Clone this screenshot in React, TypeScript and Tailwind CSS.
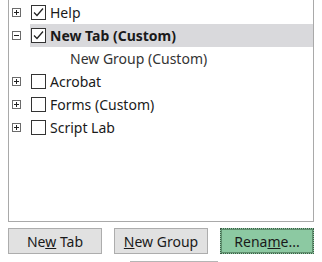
import { ReactNode } from 'react';

type Row = {
  label: string;
  expand?: 'plus' | 'minus';
  checked?: boolean;
  bold?: boolean;
  selected?: boolean;
  child?: boolean;
};

const rows: Row[] = [
  { label: 'Help', expand: 'plus', checked: true },
  { label: 'New Tab (Custom)', expand: 'minus', checked: true, bold: true, selected: true },
  { label: 'New Group (Custom)', child: true },
  { label: 'Acrobat', expand: 'plus' },
  { label: 'Forms (Custom)', expand: 'plus' },
  { label: 'Script Lab', expand: 'plus' },
];

function ExpandBox({ kind }: { kind: 'plus' | 'minus' }) {
  return (
    <svg width="9" height="9" viewBox="0 0 9 9" className="shrink-0">
      <rect x="0.5" y="0.5" width="8" height="8" fill="white" stroke="#6b6b6b" />
      <line x1="2" y1="4.5" x2="7" y2="4.5" stroke="#222" />
      {kind === 'plus' && <line x1="4.5" y1="2" x2="4.5" y2="7" stroke="#222" />}
    </svg>
  );
}

function CheckBox({ checked }: { checked?: boolean }) {
  return (
    <svg width="15" height="15" viewBox="0 0 15 15" className="shrink-0">
      <rect x="0.5" y="0.5" width="14" height="14" fill="white" stroke="#333" />
      {checked && (
        <path d="M3 7.5 L6 10.5 L12 3.5" fill="none" stroke="#222" strokeWidth="1.3" />
      )}
    </svg>
  );
}

function Button({ children, primary }: { children: ReactNode; primary?: boolean }) {
  return (
    <button
      type="button"
      className={
        primary
          ? 'h-[26px] flex-1 bg-[#8cc9a2] border border-dotted border-[#3d5a46] outline outline-1 outline-[#5f8f6e] -outline-offset-2 text-[14px] text-[#1a1a1a]'
          : 'h-[26px] flex-1 bg-[#e1e1e1] border border-[#adadad] text-[14px] text-[#1a1a1a]'
      }
    >
      {children}
    </button>
  );
}

export default function App() {
  return (
    <div
      className="w-[322px] h-[262px] bg-white overflow-hidden flex flex-col px-2"
      style={{ fontFamily: '"Noto Sans", "Open Sans", sans-serif' }}
    >
      {/* Tree panel */}
      <div className="h-[222px] border-l border-r border-b border-[#a9a9a9] pt-[1px]">
        {rows.map((r) => (
          <div key={r.label} className="h-[23px] flex items-center">
            <div className="w-[21px] flex justify-start pl-[3px]">
              {r.expand && <ExpandBox kind={r.expand} />}
            </div>
            {r.child ? (
              <div className="pl-[40px] text-[14px] text-[#333] leading-none">{r.label}</div>
            ) : (
              <div
                className={`flex-1 h-full flex items-center ${r.selected ? 'bg-[#d9d9dc]' : ''}`}
              >
                <div className="pl-[1px]">
                  <CheckBox checked={r.checked} />
                </div>
                <span
                  className={`pl-[4px] text-[14px] leading-none text-[#1a1a1a] ${r.bold ? 'font-bold' : ''}`}
                >
                  {r.label}
                </span>
              </div>
            )}
          </div>
        ))}
      </div>

      {/* Buttons */}
      <div className="flex gap-3 mt-[6px]">
        <Button>
          Ne<span className="underline">w</span> Tab
        </Button>
        <Button>
          <span className="underline">N</span>ew Group
        </Button>
        <Button primary>
          Rena<span className="underline">m</span>e...
        </Button>
      </div>

      <div className="mt-[7px] ml-[122px] w-[88px] border-t border-[#b5b5b5]" />
    </div>
  );
}
